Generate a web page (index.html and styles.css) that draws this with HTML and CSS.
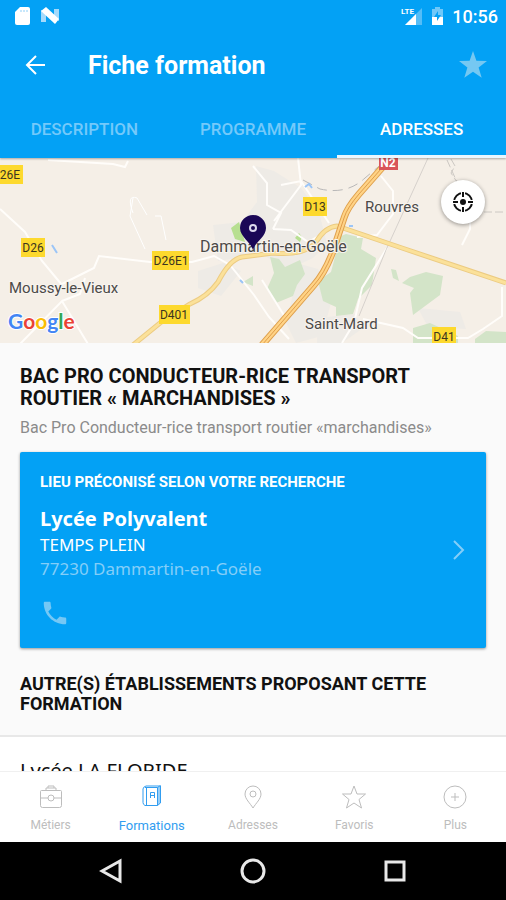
FILE: index.html
```html
<!DOCTYPE html>
<html lang="fr">
<head>
    <meta charset="UTF-8">
    <meta name="viewport" content="width=device-width, initial-scale=1">
    <title>Fiche formation</title>
    <link rel="stylesheet" href="styles.css">
</head>
<body>
    <header class="header">
        <div class="status-bar">
            <svg class="status-icon" width="20" height="20" viewBox="0 0 20 20">
                <path d="M8 1h8q2 0 2 2v14q0 2-2 2H5q-2 0-2-2V6z" fill="#fff"/>
                <path d="M9 4v2M12 4v2M15 4v2" stroke="#8fd0f8" stroke-width="1"/>
            </svg>
            <svg class="status-icon" width="20" height="20" viewBox="0 0 20 20">
                <path d="M1 4l5 2v10H1zM14 3h5v12l-5-2z" fill="#a5dafb"/>
                <path d="M1 5l5-4 13 12-4 5z" fill="#fff"/>
            </svg>
            <svg class="status-icon status-right" width="22" height="20" viewBox="0 0 22 20">
                <path d="M21 2v17H4z" fill="#55bdf7"/>
                <path d="M15 8v11H4z" fill="#fff"/>
                <text x="0" y="8" class="lte">LTE</text>
            </svg>
            <svg class="status-icon" width="13" height="20" viewBox="0 0 13 20">
                <path d="M4 1h5v2h3v8H1V3h3z" fill="#70c8f9"/>
                <path d="M1 11h11v8H1z" fill="#fff"/>
                <path d="M7 5l-4 6h3v4l4-6H7z" fill="#03a1f5"/>
            </svg>
            <span class="clock">10:56</span>
        </div>
        <div class="toolbar">
            <button class="icon-button" aria-label="Retour">
                <svg width="24" height="24" viewBox="0 0 24 24"><path d="M21 12H3M12 3l-9 9 9 9" fill="none" stroke="#fff" stroke-width="2"/></svg>
            </button>
            <h1>Fiche formation</h1>
            <button class="icon-button" aria-label="Ajouter aux favoris">
                <svg width="30" height="30" viewBox="0 0 30 30"><path d="M15 1l3.400 9.800 10.600.2-8.400 6.400 3.100 10.400L15 21.700l-8.700 6.100 3.100-10.400L1 11l10.600-.2z" fill="#75c8f2"/></svg>
            </button>
        </div>
        <nav class="tabs">
            <a href="#description">DESCRIPTION</a>
            <a href="#programme">PROGRAMME</a>
            <a href="#adresses" class="active">ADRESSES</a>
        </nav>
    </header>

    <section class="map" id="adresses">
        <svg class="map-canvas" viewBox="0 0 506 185" preserveAspectRatio="xMidYMid slice">
            <!-- zones urbaines -->
            <g fill="#eeebe6">
                <path d="M256 8l18 5 27 17 18 24 8 32-14 14-26 12-25-16-44 7-5-36 29-3 15-20z"/>
                <path d="M198 113l25-8 18 8-20 25-23-8zM300 106l18 5 14 30-10 37-26 7-10-20z"/>
                <path d="M318 160l37-4 8 14-21 15h-25zM418 150l42 4 6 17-38-2z"/>
            </g>
            <!-- espaces verts -->
            <g fill="#d3e4c8">
                <path d="M270 99l9 2 6 8 15-7 5 14-8 11-4 11-17 7-9-14 7-16z"/>
                <path d="M336 80l10-4 17 4-2 11 15 9-4 27-14 14-5 15-17 2v-9l-13-6-5-20 13-9 5-19z"/>
                <path d="M410 119l16-5 17 4-3 19-27 20-3-22 4-5-12-5zM391 111l5 1 3 11-6-3zM413 170l17-5 28 13v7h-45zM475 181l11-8 20 1v11h-31zM243 124l10-6v10z"/>
            </g>
            <path d="M231 70l8-6 6 20-10-3zM295 80l4-5 3 4-2 5z" fill="#b7df91"/>
            <!-- routes secondaires -->
            <g fill="none" stroke="#fffdfa" stroke-width="2">
                <path d="M0 51l25 23 17 29 20 24M48 2l65 4 12 3 3-6"/>
                <path d="M62 126l32-16 5-12 51 6h42l22-6 16 9 24 30 15 22 20 22M20 186l42-43 26 43M62 143l18-7 5-16"/>
                <path d="M253 8l14 17v22l14 8-8 16M274 63l27-36-3-27M281 27l20-4 28 42M273 71l18 1 17 12 16-9M381 18l12 15v23l-16 21-20 2M387 90l-25 40-8 35-12 20"/>
                <path d="M363 161l40 9 15 10h50l15-9 19-13V129M262 122l23 37 22-26M470 48v23l-8 16"/>
            </g>
            <path d="M133 55q-7-19 4-15l10 17M130 58l15 33M155 58h6l5 24M133 40l-3 18" fill="none" stroke="#fff" stroke-width="1"/>
            <path d="M428 0l-42 92-27 66" fill="none" stroke="#d6d1cc" stroke-width="1"/>
            <path d="M303 22l17 9q27 6 45-11l19-16" fill="none" stroke="#b9b8b8" stroke-width="1" stroke-dasharray="10 6"/>
            <path d="M447 2l10 22M451 1l4 7-4 7 6 9M484 54h22" fill="none" stroke="#ccc8c3" stroke-width="1" stroke-dasharray="8 3"/>
            <path d="M52 87l5 8M240 122l3 3M349 68h4M305 29l4-3 3 4" fill="none" stroke="#9bc5f7" stroke-width="2"/>
            <!-- départementales et nationale -->
            <path d="M133 187l27-22 30-19q18-8 28-22 12-23 24-25l31-4q32 3 43-11 9-15 21-16l65 22 104 35" fill="none" stroke="#eccb82" stroke-width="5"/>
            <path d="M133 187l27-22 30-19q18-8 28-22 12-23 24-25l31-4q32 3 43-11 9-15 21-16l65 22 104 35" fill="none" stroke="#fbe19a" stroke-width="3"/>
            <path d="M388 3l-29 33q-12 14-15 24l-12 36q-8 20-18 31l-52 60" fill="none" stroke="#dfa04d" stroke-width="7"/>
            <path d="M388 3l-29 33q-12 14-15 24l-12 36q-8 20-18 31l-52 60" fill="none" stroke="#ffd386" stroke-width="5"/>
            <path d="M388 3l-29 33q-12 14-15 24l-12 36q-8 20-18 31l-52 60" fill="none" stroke="#df9d4c" stroke-width="1"/>
            <g fill="#fdd92e">
                <path d="M-6 7h29v19H-6zM21 80h24v19H21zM152 93h37v19h-37zM159 147h31v19h-31zM303 39h24v19h-24zM432 169h24v19h-24z"/>
            </g>
            <path d="M379-7h19v19h-19z" fill="#d9545a"/>
            <g class="shield">
                <text x="10" y="21">26E</text>
                <text x="33" y="94">D26</text>
                <text x="171" y="107">D26E1</text>
                <text x="174" y="161">D401</text>
                <text x="315" y="53">D13</text>
                <text x="444" y="183">D41</text>
                <text x="388" y="9" class="shield-red">N2</text>
            </g>
            <g class="town">
                <text x="9" y="135">Moussy-le-Vieux</text>
                <text x="365" y="54">Rouvres</text>
                <text x="305" y="171">Saint-Mard</text>
                <text x="200" y="94" class="town-main">Dammartin-en-Goële</text>
            </g>
            <path d="M253 92c-2-8-13-13-13-22a13 13 0 0 1 26 0c0 9-11 14-13 22z" fill="#1a0756"/>
            <circle cx="253" cy="70" r="3" fill="#1a0756" stroke="#dcd8ed" stroke-width="2"/>
            <text x="8" y="171" class="google"><tspan fill="#4285f4">G</tspan><tspan fill="#ea4335">o</tspan><tspan fill="#fbbc05">o</tspan><tspan fill="#4285f4">g</tspan><tspan fill="#34a853">l</tspan><tspan fill="#ea4335">e</tspan></text>
        </svg>
        <button class="locate" aria-label="Me localiser">
            <svg width="24" height="24" viewBox="0 0 24 24">
                <circle cx="12" cy="12" r="9" fill="none" stroke="#111" stroke-width="2"/>
                <path d="M12 1v4M12 19v4M1 12h4M19 12h4" stroke="#fff" stroke-width="4"/>
                <path d="M12 2v5M12 17v5M2 12h5M17 12h5" stroke="#111" stroke-width="2"/>
                <circle cx="12" cy="12" r="3" fill="#111"/>
            </svg>
        </button>
    </section>

    <main class="content">
        <section class="formation">
            <h2>BAC PRO CONDUCTEUR-RICE TRANSPORT ROUTIER « MARCHANDISES »</h2>
            <p class="subtitle">Bac Pro Conducteur-rice transport routier «marchandises»</p>
            <article class="card">
                <h3>LIEU PRÉCONISÉ SELON VOTRE RECHERCHE</h3>
                <a class="school" href="#lycee-polyvalent">
                    <div>
                        <p class="school-name">Lycée Polyvalent</p>
                        <p class="school-time">TEMPS PLEIN</p>
                        <p class="school-city">77230 Dammartin-en-Goële</p>
                    </div>
                    <svg width="14" height="22" viewBox="0 0 14 22"><path d="M2 2l9 9-9 9" fill="none" stroke="#84cef8" stroke-width="2"/></svg>
                </a>
                <button class="phone" aria-label="Appeler">
                    <svg width="30" height="30" viewBox="0 0 24 24"><path d="M6.620 10.790c1.440 2.830 3.760 5.140 6.590 6.590l2.200-2.200c.27-.27.67-.36 1.020-.24 1.120.37 2.330.57 3.570.57.55 0 1 .45 1 1V20c0 .55-.45 1-1 1-9.390 0-17-7.610-17-17 0-.55.45-1 1-1h3.500c.55 0 1 .45 1 1 0 1.250.2 2.450.57 3.570.11.35.03.74-.25 1.020z" fill="#75c8f5"/></svg>
                </button>
            </article>
            <h3 class="others-title">AUTRE(S) ÉTABLISSEMENTS PROPOSANT CETTE FORMATION</h3>
        </section>
        <a class="other" href="#lycee-la-floride">Lycée LA FLORIDE</a>
    </main>

    <nav class="bottom-nav">
        <a href="#metiers">
            <svg width="26" height="26" viewBox="0 0 26 26">
                <path d="M3.500 6.500h19q1 0 1 1v14q0 2-2 2h-17q-2 0-2-2v-14q0-1 1-1zM8 6V4h10v2M10 4V2h6v2M2 14h8M16 14h8"/>
                <circle cx="13" cy="14" r="3"/>
            </svg>
            Métiers
        </a>
        <a href="#formations" class="active">
            <svg width="26" height="26" viewBox="0 0 26 26">
                <path d="M6 3.500h12.500v18H6q-2-1-2-3V5q0-2 3-3h14.500v17l-3 2.500M18.500 3.500l3-2M20 3v17M7.500 4v17M11.500 8.500h4v5.500M11.500 14V8.500M11.500 11.500h4"/>
            </svg>
            Formations
        </a>
        <a href="#lieux">
            <svg width="26" height="26" viewBox="0 0 26 26">
                <path d="M13 24C10 19 5 15 5 10a8 8 0 0 1 16 0c0 5-5 9-8 14z"/>
                <circle cx="13" cy="10" r="3"/>
            </svg>
            Adresses
        </a>
        <a href="#favoris">
            <svg width="26" height="26" viewBox="0 0 26 26"><path d="M13 2l3 8h8.500l-6.500 5.500 2.500 8.500-7.500-5-7.500 5L8 15.500 1.500 10H10z"/></svg>
            Favoris
        </a>
        <a href="#plus">
            <svg width="26" height="26" viewBox="0 0 26 26">
                <circle cx="13" cy="13" r="11"/>
                <path d="M13 9v8M9 13h8"/>
            </svg>
            Plus
        </a>
    </nav>

    <div class="system-bar">
        <button aria-label="Précédent"><svg width="24" height="26" viewBox="0 0 24 26"><path d="M21 3v20L3 13z"/></svg></button>
        <button aria-label="Accueil"><svg width="26" height="26" viewBox="0 0 26 26"><circle cx="13" cy="13" r="11"/></svg></button>
        <button aria-label="Applications"><svg width="24" height="24" viewBox="0 0 24 24"><path d="M3 3h18v18H3z"/></svg></button>
    </div>
</body>
</html>
```
FILE: styles.css
```css
* {
    box-sizing: border-box;
}

body {
    margin: 0;
    height: 100vh;
    display: flex;
    flex-direction: column;
    font-family: Roboto, sans-serif;
    background-color: #fafafa;
    color: #111;
}

h1, h2, h3, p {
    margin: 0;
}

a {
    color: inherit;
    text-decoration: none;
}

button {
    padding: 0;
    border: none;
    background: none;
    cursor: pointer;
}

svg {
    display: block;
}

/* En-tête */
.header {
    position: relative;
    z-index: 1;
    background-color: #03a1f5;
    color: white;
    flex-shrink: 0;
    box-shadow: 0 1px 2px rgba(0,0,0,0.3);
}

.status-bar {
    display: flex;
    align-items: center;
    gap: 8px;
    height: 32px;
    padding: 0 8px 0 12px;
}

.status-right {
    margin-left: auto;
}

.lte {
    font-size: 8px;
    font-weight: bold;
    fill: white;
}

.clock {
    font-size: 18px;
    font-weight: 500;
}

.toolbar {
    display: flex;
    align-items: center;
    height: 66px;
    padding: 0 18px 0 24px;
}

.toolbar h1 {
    flex: 1;
    margin-left: 40px;
    font-size: 25px;
    font-weight: bold;
}

.tabs {
    display: grid;
    grid-template-columns: repeat(3, 1fr);
    height: 60px;
    text-align: center;
    font-size: 17px;
    font-weight: 500;
    color: #74c9fa;
}

.tabs a {
    height: 60px;
    line-height: 62px;
}

.tabs .active {
    color: white;
    border-bottom: 3px solid #e9f7ff;
}

/* Carte */
.map {
    position: relative;
    flex-shrink: 0;
    height: 185px;
    background-color: #f5efe7;
}

.map-canvas {
    width: 100%;
    height: 100%;
}

.shield {
    font-size: 12px;
    text-anchor: middle;
    fill: #3c3520;
}

.shield .shield-red {
    font-weight: bold;
    fill: white;
}

.town {
    font-size: 15px;
    fill: #4c4a48;
    stroke: #f8f4ef;
    stroke-width: 2px;
    paint-order: stroke;
}

.town-main {
    font-size: 16px;
}

.google {
    font-family: Lato, sans-serif;
    font-size: 21px;
    font-weight: bold;
    stroke: white;
    stroke-width: 2px;
    paint-order: stroke;
}

.locate {
    position: absolute;
    top: 22px;
    right: 21px;
    display: flex;
    align-items: center;
    justify-content: center;
    width: 44px;
    height: 44px;
    border-radius: 50%;
    background-color: white;
    box-shadow: 0 1px 4px rgba(0,0,0,0.4);
}

/* Contenu */
.content {
    flex: 1;
    min-height: 0;
    overflow: hidden;
    background-color: white;
}

.formation {
    padding: 22px 20px 21px;
    background-color: #fafafa;
    border-bottom: 2px solid #e8e8e8;
}

.formation h2 {
    font-size: 20px;
    font-weight: bold;
    line-height: 22px;
}

.subtitle {
    margin-top: 8px;
    font-size: 16px;
    line-height: 22px;
    color: #8b8b8b;
}

.card {
    margin: 13px 0 26px;
    padding: 19px 20px 20px;
    background-color: #03a1f5;
    color: white;
    border-radius: 2px;
    box-shadow: 0 1px 3px rgba(0,0,0,0.4);
}

.card h3 {
    font-size: 15px;
    font-weight: bold;
    line-height: 22px;
}

.school {
    display: flex;
    align-items: center;
    justify-content: space-between;
    margin-top: 12px;
    font-family: "Noto Sans", sans-serif;
    font-size: 17px;
    line-height: 24px;
}

.school svg {
    margin-top: 14px;
}

.school .school-name {
    font-size: 20px;
    font-weight: bold;
    line-height: 28px;
}

.school-city {
    color: #84cef8;
}

.phone {
    display: block;
    margin-top: 17px;
}

.others-title {
    font-size: 18px;
    font-weight: bold;
    line-height: 20px;
}

.other {
    display: block;
    padding: 20px;
    font-family: "Noto Sans", sans-serif;
    font-size: 20px;
    line-height: 28px;
}

/* Navigation */
.bottom-nav {
    display: grid;
    grid-template-columns: repeat(5, 1fr);
    flex-shrink: 0;
    height: 71px;
    padding-top: 12px;
    background-color: white;
    border-top: 1px solid #f0f0f0;
    font-size: 12px;
    color: #bdbdbd;
}

.bottom-nav a {
    display: flex;
    flex-direction: column;
    align-items: center;
    gap: 8px;
}

.bottom-nav svg {
    fill: none;
    stroke: currentColor;
    stroke-width: 1px;
}

.bottom-nav .active {
    font-size: 13px;
    color: #319df0;
}

.system-bar {
    display: flex;
    align-items: center;
    justify-content: center;
    gap: 117px;
    flex-shrink: 0;
    height: 58px;
    background-color: black;
}

.system-bar svg {
    fill: none;
    stroke: #e8e8e8;
    stroke-width: 3px;
}
```
